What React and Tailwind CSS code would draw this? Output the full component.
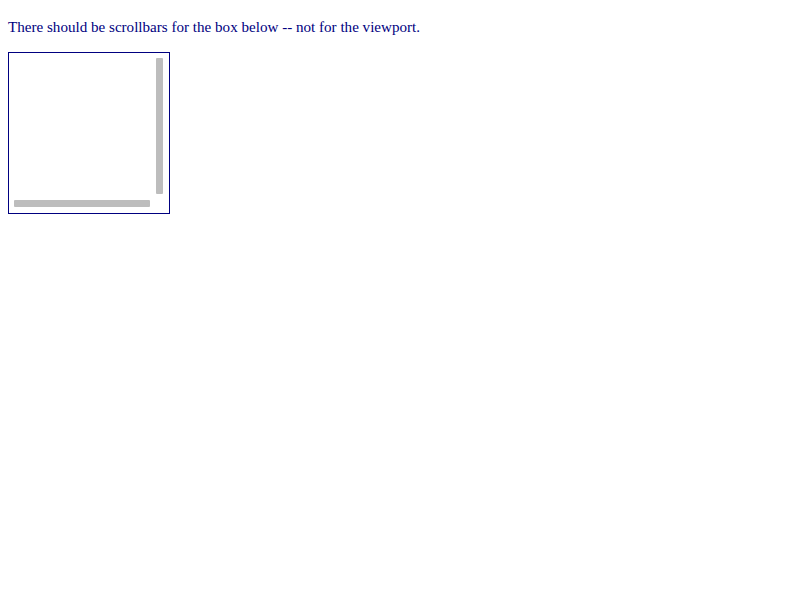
import React from 'react';

export default function App() {
  return (
    <div className="min-h-[600px] bg-white px-2 pt-[18px] font-['Liberation_Serif',serif] text-[#000080]">
      <p className="text-[15.1px] leading-[18px]">
        There should be scrollbars for the box below -- not for the viewport.
      </p>
      <div className="mt-[16px] w-[162px] h-[162px] border border-[#000080]">
        <div className="grid h-full grid-cols-[1fr_7px] grid-rows-[1fr_7px] gap-[6px] pl-[5px] pt-[5px] pr-[6px] pb-[6px]">
          <div></div>
          <div className="rounded-[1px] bg-[#bdbdbd]"></div>
          <div className="rounded-[1px] bg-[#bdbdbd]"></div>
          <div></div>
        </div>
      </div>
    </div>
  );
}
